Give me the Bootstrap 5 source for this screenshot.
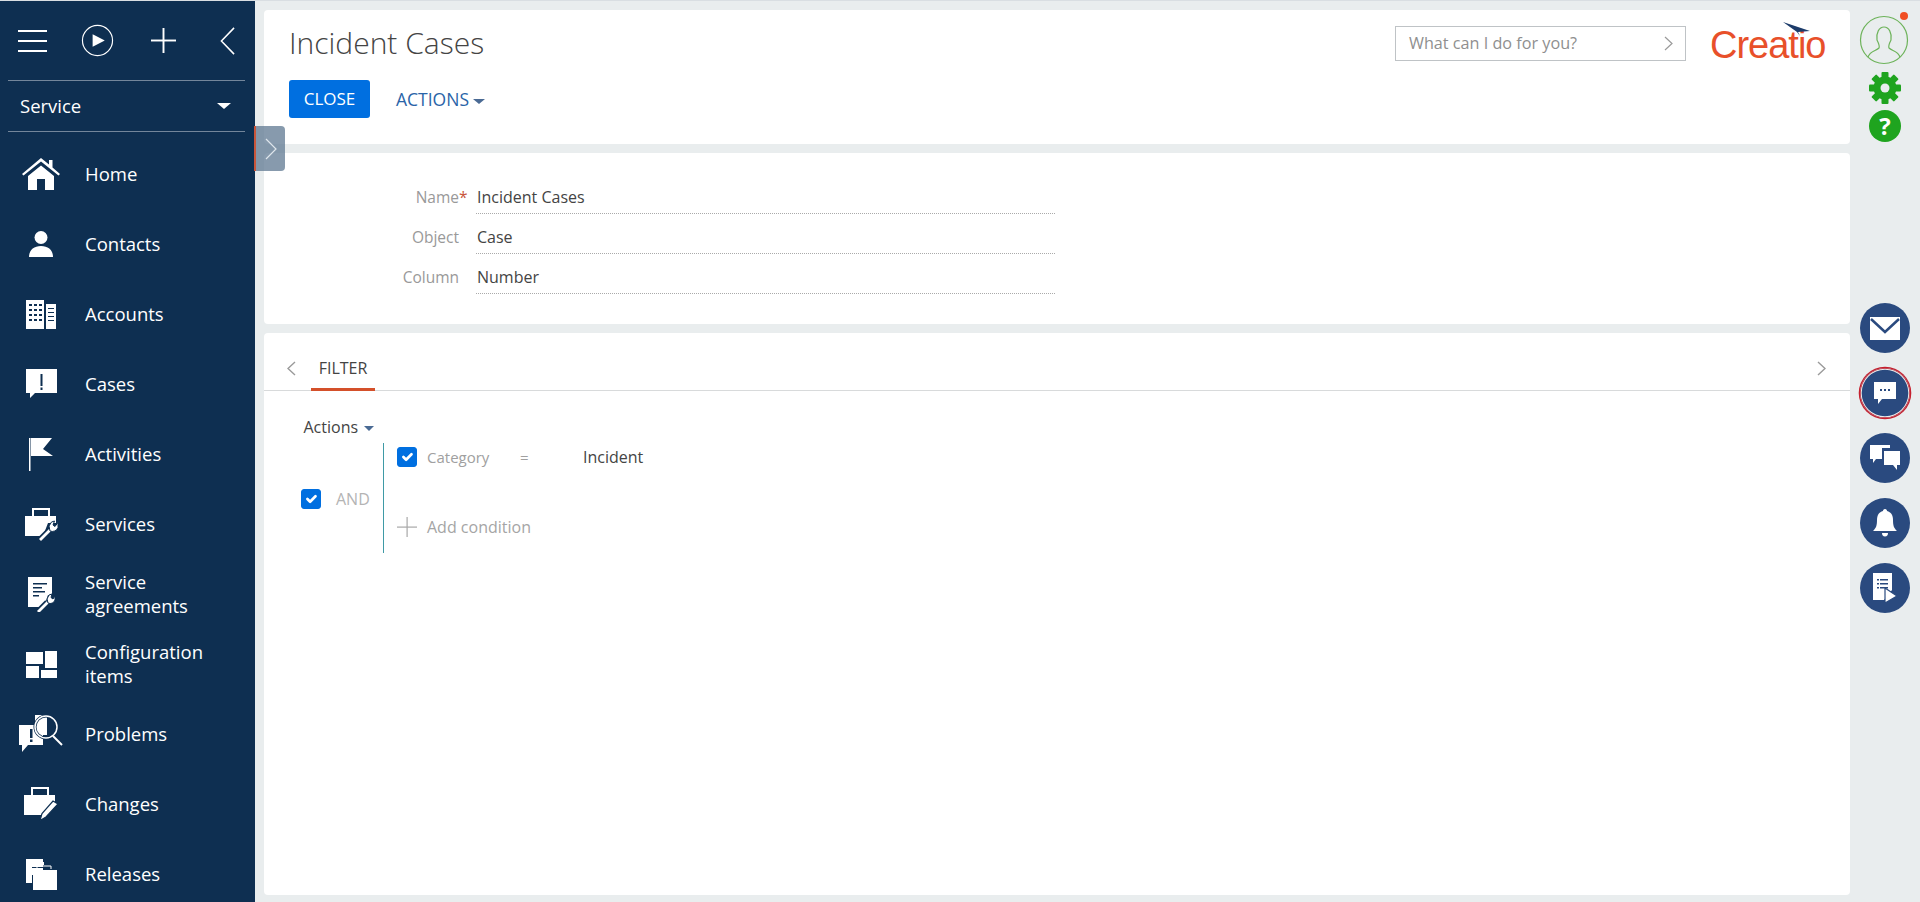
<!DOCTYPE html>
<html lang="en">
<head>
<meta charset="utf-8">
<title>Incident Cases</title>
<link rel="stylesheet" href="https://cdn.jsdelivr.net/npm/bootstrap@5.3.0/dist/css/bootstrap.min.css">
<style>
html,body{height:100%;overflow:hidden}
body{font-family:"Open Sans","Liberation Sans",sans-serif;background:#e9edee;color:#444;font-size:16px}
.shell{height:902px;border-top:1px solid #d9dee2}
.side{width:255px;flex:none;background:#0e2f51;color:#fff;overflow:hidden}
.side-top{height:79px;padding:0 0 0 18px;flex:none}
.side-sel{height:52px;flex:none;margin:0 10px 0 8px;padding:0 14px 0 12px;border-top:1px solid #73869b;border-bottom:1px solid #73869b;font-size:18.500px}
.caret-w{width:0;height:0;border-left:7.500px solid transparent;border-right:7.500px solid transparent;border-top:6px solid #fff}
.nav-row{height:70px;font-size:18.500px;line-height:24px;flex:none}
.nav-ic{width:85px;flex:none;display:flex;justify-content:center;padding-right:3px}
.nav-list{padding-top:7px;flex:none}
.main-col{flex:1;min-width:0;padding:9px 0 7px 9px;position:relative}
.pane{background:#fff;border:0;border-radius:4px}
.pane-head{height:134px;padding:0 24px 0 25px;margin-bottom:9px}
.pane-form{height:171px;margin-bottom:9px;padding-top:21px}
.pane-filter{height:562px}
.page-title{font-size:30px;font-weight:300;line-height:40px;color:#444;margin:0}
.head-row{padding-top:17px}
.btn-close-c{background:#006fe0;border:0;width:81px;height:38px;font-size:17px;padding:0;border-radius:3px;color:#fff}
.btn-act{font-size:17.500px;color:#2a64a8;margin-left:26px}
.caret-b{display:inline-block;width:0;height:0;border-left:6.500px solid transparent;border-right:6.500px solid transparent;border-top:5.500px solid #4a6a94;vertical-align:middle;margin-left:4px}
.search-c{width:291px;height:35px;border:1px solid #bfc3c6;padding:0 12px 0 13px;color:#8f8f8f;font-size:16.200px;margin-top:16px}
.logo-c{width:116px;margin-left:24px;margin-top:12px;position:relative;height:36px}
.logo-t{color:#e8502a;font-size:38px;line-height:42px;font-family:"Liberation Sans",sans-serif;letter-spacing:-1px;display:block;margin-top:2px;white-space:nowrap}
.swoosh{position:absolute;right:15px;top:0;z-index:2}
.fld{height:40px;align-items:flex-end}
.fld-l{width:213px;text-align:right;color:#999;flex:none;padding-right:9px;line-height:32px;height:33px;font-size:15.500px}
.fld-s{color:#c9553a;display:inline-block;width:9px;text-align:left}
.fld-v{width:579px;padding-left:1px;height:33px;line-height:32px;border-bottom:1px dotted #aaa;margin-left:-1px}
.tabs-c{height:58px;border-bottom:1px solid #d8dadb;padding:10px 24px 0 23px}
.tab-a{font-size:16px;color:#444;height:47px;line-height:49px;border-bottom:3px solid #d4502a;width:64px;margin-left:15px;text-align:center;position:relative;top:1px}
.tab-chev{margin-top:3px}
.filter-b{padding:20px 0 0 40.500px}
.f-actions{color:#444;font-size:16px;line-height:32px;margin-left:-1px}
.f-actions .caret-b{border-left-width:5.500px;border-right-width:5.500px;border-top-width:5px;margin-left:6px}
.f-cols{margin-left:-4.500px;margin-top:2px}
.f-and{width:83px;flex:none;padding-left:1px;color:#b4b4b4}
.form-check-input.chk{width:20px;height:20px;margin:0;flex:none;background-color:#006fe0;border-color:#006fe0;border-radius:3px;float:none;opacity:1}
.f-and span{margin-left:15px}
.f-tree{border-left:1px solid #3f9aa6;height:110px;padding-left:12.500px;margin-top:-2px}
.f-cond{height:28px}
.f-name{color:#a0a0a0;font-size:15px;margin-left:10.500px;width:93px;flex:none}
.f-eq{color:#a0a0a0;width:63px;flex:none;font-size:15px}
.f-add{margin-top:44px;color:#a5a5a5}
.f-add span{margin-left:10.500px}
.handle{position:absolute;left:-1px;top:125px;width:31px;height:45px;background:rgba(95,120,145,.75);border-left:2px solid #c9553a;border-radius:0 4px 4px 0;display:flex;align-items:center;justify-content:center;z-index:5}
.rail{width:70px;flex:none;position:relative;padding-top:14px;padding-left:9px}
.avatar-dot{position:absolute;right:12px;top:11px;width:8px;height:8px;border-radius:50%;background:#f04e23}
.round{width:50px;height:50px;border-radius:50%;background:#2a4a7f;display:flex;align-items:center;justify-content:center;margin:0 0 15px 1px}
.round.ring{box-shadow:0 0 0 1.300px #c5202e,inset 0 0 0 .7px #c5202e,inset 0 0 0 1.700px #e9edee}
.rail-gap{height:161px}
.rail-ic{display:block;margin-left:10px}
.help-c{width:32px;height:32px;border-radius:50%;background:#1fa41f;color:#fff;font-weight:700;font-size:24px;line-height:32px;text-align:center;margin:6px 0 0 10px}
</style>
</head>
<body>
<div class="shell d-flex">
  <aside class="side d-flex flex-column">
    <div class="side-top d-flex align-items-center">
      <svg width="29" height="22" viewBox="0 0 29 22" fill="#fff"><rect y="0" width="29" height="2"/><rect y="10" width="29" height="2"/><rect y="20" width="29" height="2"/></svg>
      <svg width="33" height="33" viewBox="0 0 34 34" style="margin-left:34px"><circle cx="17" cy="17" r="15.500" fill="none" stroke="#fff" stroke-width="1.200"/><path d="M12 10.500 24.500 17 12 23.500z" fill="#fff"/></svg>
      <svg width="25" height="25" viewBox="0 0 26 26" style="margin-left:37px" fill="#fff"><rect x="12" y="0" width="2" height="26"/><rect y="12" width="26" height="2"/></svg>
      <svg width="15" height="30" viewBox="0 0 16 30" style="margin-left:44px"><path d="M15 1 1.500 15 15 29" fill="none" stroke="#fff" stroke-width="1.600"/></svg>
    </div>
    <div class="side-sel d-flex align-items-center justify-content-between"><span>Service</span><span class="caret-w"></span></div>
    <nav class="nav-list">
      <div class="nav-row d-flex align-items-center"><span class="nav-ic"><svg width="38" height="32" viewBox="0 0 38 32" fill="#fff"><path d="M19 0 27 6.500V2h3.500v7.500L38 16l-1.500 1.500L19 3.500 1.500 17.500 0 16z"/><path d="M6 18 19 7.500 32 18v14H23V21H15V32H6z"/></svg></span><span>Home</span></div>
      <div class="nav-row d-flex align-items-center"><span class="nav-ic"><svg width="24" height="26" viewBox="0 0 24 26" fill="#fff"><circle cx="12" cy="6.500" r="6.500"/><path d="M0 26c0-7 5-11 12-11s12 4 12 11z"/></svg></span><span>Contacts</span></div>
      <div class="nav-row d-flex align-items-center"><span class="nav-ic"><svg width="30" height="30" viewBox="0 0 30 30"><path fill="#fff" d="M0 1h18v29H0zM20 5h10v25H20z"/><g fill="#0e2f51"><path d="M3 5h3v2H3zM8 5h3v2H8zM13 5h3v2h-3zM3 10h3v2H3zM8 10h3v2H8zM13 10h3v2h-3zM3 15h3v2H3zM8 15h3v2H8zM13 15h3v2h-3zM3 20h3v2H3zM8 20h3v2H8zM13 20h3v2h-3zM22 9h6v1h-6zM22 13h6v1h-6zM22 17h6v1h-6zM22 21h6v1h-6z"/></g></svg></span><span>Accounts</span></div>
      <div class="nav-row d-flex align-items-center"><span class="nav-ic"><svg width="31" height="30" viewBox="0 0 31 30"><path fill="#fff" d="M0 0h31v24H9l-5 5v-5H0z"/><path fill="#0e2f51" d="M14.500 5h2v12h-2zM14.500 18.500h2v2.500h-2z"/></svg></span><span>Cases</span></div>
      <div class="nav-row d-flex align-items-center"><span class="nav-ic"><svg width="24" height="33" viewBox="0 0 24 33" fill="#fff"><path d="M0 0h1.500v33H0zM2 0h21l-9 11 10 7-22 0z"/></svg></span><span>Activities</span></div>
      <div class="nav-row d-flex align-items-center"><span class="nav-ic"><svg width="33" height="33" viewBox="0 0 33 33"><path fill="#fff" d="M7 0h18v8h-2V2H9v6H7zM0 8h31v7h-8l-5 13H0z"/><path fill="none" stroke="#0e2f51" stroke-width="5" d="M15 31l10-10"/><path fill="none" stroke="#fff" stroke-width="2.800" d="M15 32l11-11"/><path fill="#fff" stroke="#0e2f51" stroke-width="1" d="M33 14.500v5a6 6 0 0 1-8 3.500l-1-5 2.500-4 3-1-1.500 4 2 1.500z"/></svg></span><span>Services</span></div>
      <div class="nav-row d-flex align-items-center"><span class="nav-ic"><svg width="27" height="35" viewBox="0 0 27 35"><path fill="#fff" d="M0 0h24v18h-4l-4 12H0z"/><path fill="#0e2f51" d="M5 6h14v1.500H5zM5 10h9v1.500H5zM5 14h12v1.500H5zM5 18h6v1.500H5z"/><path fill="none" stroke="#0e2f51" stroke-width="5" d="M10 34l9-9"/><path fill="none" stroke="#fff" stroke-width="2.800" d="M10 35l10-10"/><path fill="#fff" stroke="#0e2f51" stroke-width="1" d="M27 19v4a5 5 0 0 1-7 3l-1-4 2-4 3-1-1 3.500 2 1.500z"/></svg></span><span>Service<br>agreements</span></div>
      <div class="nav-row d-flex align-items-center"><span class="nav-ic"><svg width="31" height="27" viewBox="0 0 31 27" fill="#fff"><path d="M0 1h17v12H0zM19 0h12v17H19zM0 15h13v12H0zM15 19h16v8H15z"/></svg></span><span>Configuration<br>items</span></div>
      <div class="nav-row d-flex align-items-center"><span class="nav-ic"><svg width="44" height="38" viewBox="0 0 44 38"><path fill="#fff" d="M0 10h24v20H9l-6 7v-7H0z"/><path fill="#fff" d="M16 0h12v20H16z"/><circle cx="27" cy="12" r="11" fill="none" stroke="#0e2f51" stroke-width="3"/><circle cx="27" cy="12" r="11" fill="none" stroke="#fff" stroke-width="1.500"/><path d="M34 21 43 30" stroke="#fff" stroke-width="2"/><path fill="#0e2f51" d="M11 14h2.500v9H11zM11 24.500h2.500V27H11z"/></svg></span><span>Problems</span></div>
      <div class="nav-row d-flex align-items-center"><span class="nav-ic"><svg width="34" height="34" viewBox="0 0 34 34"><path fill="#fff" d="M7 0h18v8h-2V2H9v6H7zM0 8h31v8L17 28H0z"/><path fill="#fff" stroke="#0e2f51" stroke-width="1.200" d="M29 14 34 17 22 30l-6 3.500 2-7z"/></svg></span><span>Changes</span></div>
      <div class="nav-row d-flex align-items-center"><span class="nav-ic"><svg width="31" height="31" viewBox="0 0 31 31"><path fill="#fff" d="M0 0h17v8H6v16H0z"/><path fill="#fff" d="M0 3h18v3H0z"/><path fill="#fff" d="M6 9h11v7H6z"/><path fill="none" stroke="#fff" stroke-width="1" d="M11 10V7h14v3"/><path fill="#fff" d="M7 11h24v20H7z"/></svg></span><span>Releases</span></div>
    </nav>
  </aside>
  <main class="main-col">
    <div class="handle"><svg width="12" height="22" viewBox="0 0 12 22"><path d="M1 1l10 10L1 21" fill="none" stroke="#dfe6ec" stroke-width="1.200"/></svg></div>
    <section class="pane pane-head d-flex justify-content-between">
      <div>
        <div style="height:13px"></div>
        <h1 class="page-title">Incident Cases</h1>
        <div class="head-row d-flex align-items-center">
          <button class="btn btn-primary btn-close-c">CLOSE</button>
          <span class="btn-act">ACTIONS<span class="caret-b"></span></span>
        </div>
      </div>
      <div class="d-flex align-items-start">
        <div class="search-c d-flex align-items-center justify-content-between"><span>What can I do for you?</span><svg width="9" height="15" viewBox="0 0 9 15"><path d="M1 1l7 6.500L1 14" fill="none" stroke="#9a9a9a" stroke-width="1.200"/></svg></div>
        <div class="logo-c"><svg class="swoosh" width="28" height="14" viewBox="0 0 28 14"><path fill="#1d3c6a" d="M0 0 27 9 15 10 17 14 14 10z"/></svg><span class="logo-t">Creatio</span></div>
      </div>
    </section>
    <section class="pane pane-form">
      <div class="fld d-flex"><div class="fld-l">Name<span class="fld-s">*</span></div><div class="fld-v">Incident Cases</div></div>
      <div class="fld d-flex"><div class="fld-l">Object<span class="fld-s"></span></div><div class="fld-v">Case</div></div>
      <div class="fld d-flex"><div class="fld-l">Column<span class="fld-s"></span></div><div class="fld-v">Number</div></div>
    </section>
    <section class="pane pane-filter">
      <div class="tabs-c d-flex align-items-center justify-content-between">
        <div class="d-flex align-items-center">
          <svg class="tab-chev" width="9" height="15" viewBox="0 0 9 15"><path d="M8 1 1 7.500 8 14" fill="none" stroke="#9a9a9a" stroke-width="1.400"/></svg>
          <div class="tab-a">FILTER</div>
        </div>
        <svg class="tab-chev" width="9" height="15" viewBox="0 0 9 15"><path d="M1 1l7 6.500L1 14" fill="none" stroke="#9a9a9a" stroke-width="1.400"/></svg>
      </div>
      <div class="filter-b">
        <div class="f-actions">Actions<span class="caret-b"></span></div>
        <div class="f-cols d-flex">
          <div class="f-and d-flex align-items-center"><input class="form-check-input chk" type="checkbox" checked aria-label="AND"><span>AND</span></div>
          <div class="f-tree">
            <div class="f-cond d-flex align-items-center"><input class="form-check-input chk" type="checkbox" checked aria-label="Category"><span class="f-name">Category</span><span class="f-eq">=</span><span>Incident</span></div>
            <div class="f-add d-flex align-items-center"><svg width="20" height="20" viewBox="0 0 20 20" fill="#a8a8a8"><rect x="9.500" width="1.200" height="20"/><rect y="9.500" width="20" height="1.200"/></svg><span>Add condition</span></div>
          </div>
        </div>
      </div>
    </section>
  </main>
  <aside class="rail">
    <span class="avatar-dot"></span>
    <svg class="rail-ic" style="margin-left:0" width="50" height="50" viewBox="0 0 50 50"><circle cx="25" cy="25" r="23.500" fill="none" stroke="#6db35a" stroke-width="1.200"/><path d="M9 42c2-6 8-6 11-9 1-2 0-4-2-8-1-7 2-13 7-13s8 6 7 13c-2 4-3 6-2 8 3 3 9 3 11 9" fill="none" stroke="#6db35a" stroke-width="1.200"/></svg>
    <svg class="rail-ic" style="margin:7px 0 0 10px" width="32" height="32" viewBox="0 0 32 32"><g fill="#1fa41f"><circle cx="16" cy="16" r="11.500"/><rect x="12.500" y="0" width="7" height="32" rx="1"/><rect x="12.500" y="0" width="7" height="32" rx="1" transform="rotate(45 16 16)"/><rect x="12.500" y="0" width="7" height="32" rx="1" transform="rotate(90 16 16)"/><rect x="12.500" y="0" width="7" height="32" rx="1" transform="rotate(135 16 16)"/></g><circle cx="16" cy="16" r="4.500" fill="#e9edee"/></svg>
    <div class="help-c">?</div>
    <div class="rail-gap"></div>
    <div class="round"><svg width="30" height="23" viewBox="0 0 30 23"><path fill="#fff" d="M0 0h30v23H0z"/><path d="M1 2 15 15 29 2" fill="none" stroke="#2a4a7f" stroke-width="2.500"/></svg></div>
    <div class="round ring"><svg width="22" height="22" viewBox="0 0 22 22"><path fill="#fff" d="M0 0h22v17H8l-4 5v-5H0z"/><path fill="#2a4a7f" d="M6 7h2v2H6zM10 7h2v2h-2zM14 7h2v2h-2z"/></svg></div>
    <div class="round"><svg width="30" height="26" viewBox="0 0 30 26"><path fill="#fff" d="M0 0h20v3H12v11H6l-3 4v-4H0z"/><path fill="#fff" d="M14 6h16v14h-3v5l-4-5h-9z"/></svg></div>
    <div class="round"><svg width="24" height="28" viewBox="0 0 24 28" fill="#fff"><path d="M12 0c1.500 0 2 1 2 2 4 1 6 4 6 9 0 6 1 8 4 11H0c3-3 4-5 4-11 0-5 2-8 6-9 0-1 .500-2 2-2zM9 24h6c0 2-1 3.500-3 3.500S9 26 9 24z"/></svg></div>
    <div class="round"><svg width="24" height="30" viewBox="0 0 24 30"><path fill="#fff" d="M0 0h19v17l-8 10H0z"/><path fill="#2a4a7f" d="M4 6h2v1.500H4zM7 6h8v1.500H7zM4 10h2v1.500H4zM7 10h8v1.500H7zM4 14h2v1.500H4zM7 14h8v1.500H7z"/><path fill="#fff" stroke="#2a4a7f" stroke-width="1.200" d="M12 15 24 23 12 30z"/></svg></div>
  </aside>
</div>
</body>
</html>
